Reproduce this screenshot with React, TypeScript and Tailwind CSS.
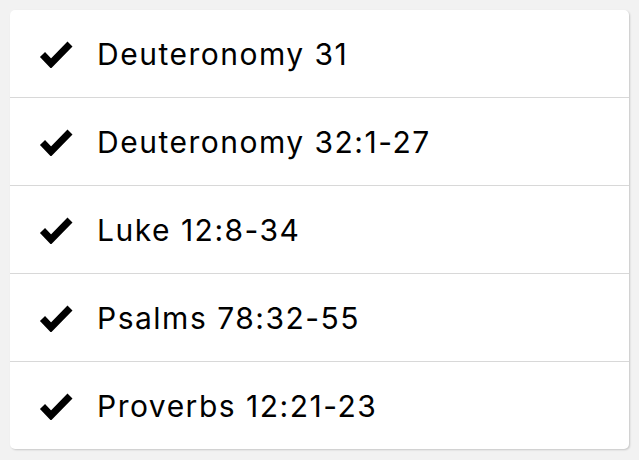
import React from "react";

const readings = [
  "Deuteronomy 31",
  "Deuteronomy 32:1-27",
  "Luke 12:8-34",
  "Psalms 78:32-55",
  "Proverbs 12:21-23",
];

function Check() {
  return (
    <svg width="34" height="28" viewBox="0 0 34 28" className="shrink-0">
      <polyline
        points="3.5,14.5 12,23.5 31,4"
        fill="none"
        stroke="#000"
        strokeWidth="7"
        strokeLinejoin="miter"
        strokeLinecap="butt"
      />
    </svg>
  );
}

export default function App() {
  return (
    <div className="min-h-[460px] w-full bg-[#f2f2f2] p-[10px]">
      <div
        className="overflow-hidden rounded-[5px] bg-white shadow-[1px_1px_2px_rgba(0,0,0,0.18)]"
        style={{ fontFamily: "Inter, 'Noto Sans', sans-serif" }}
      >
        {readings.map((r, i) => (
          <div
            key={r}
            className={`flex items-center pl-[29px] ${
              i > 0 ? "h-[88px] border-t border-[#d8d8d8]" : "h-[87px]"
            }`}
          >
            <Check />
            <span className="ml-[24px] text-[30px] leading-none tracking-[1.5px] text-black">
              {r}
            </span>
          </div>
        ))}
      </div>
    </div>
  );
}
